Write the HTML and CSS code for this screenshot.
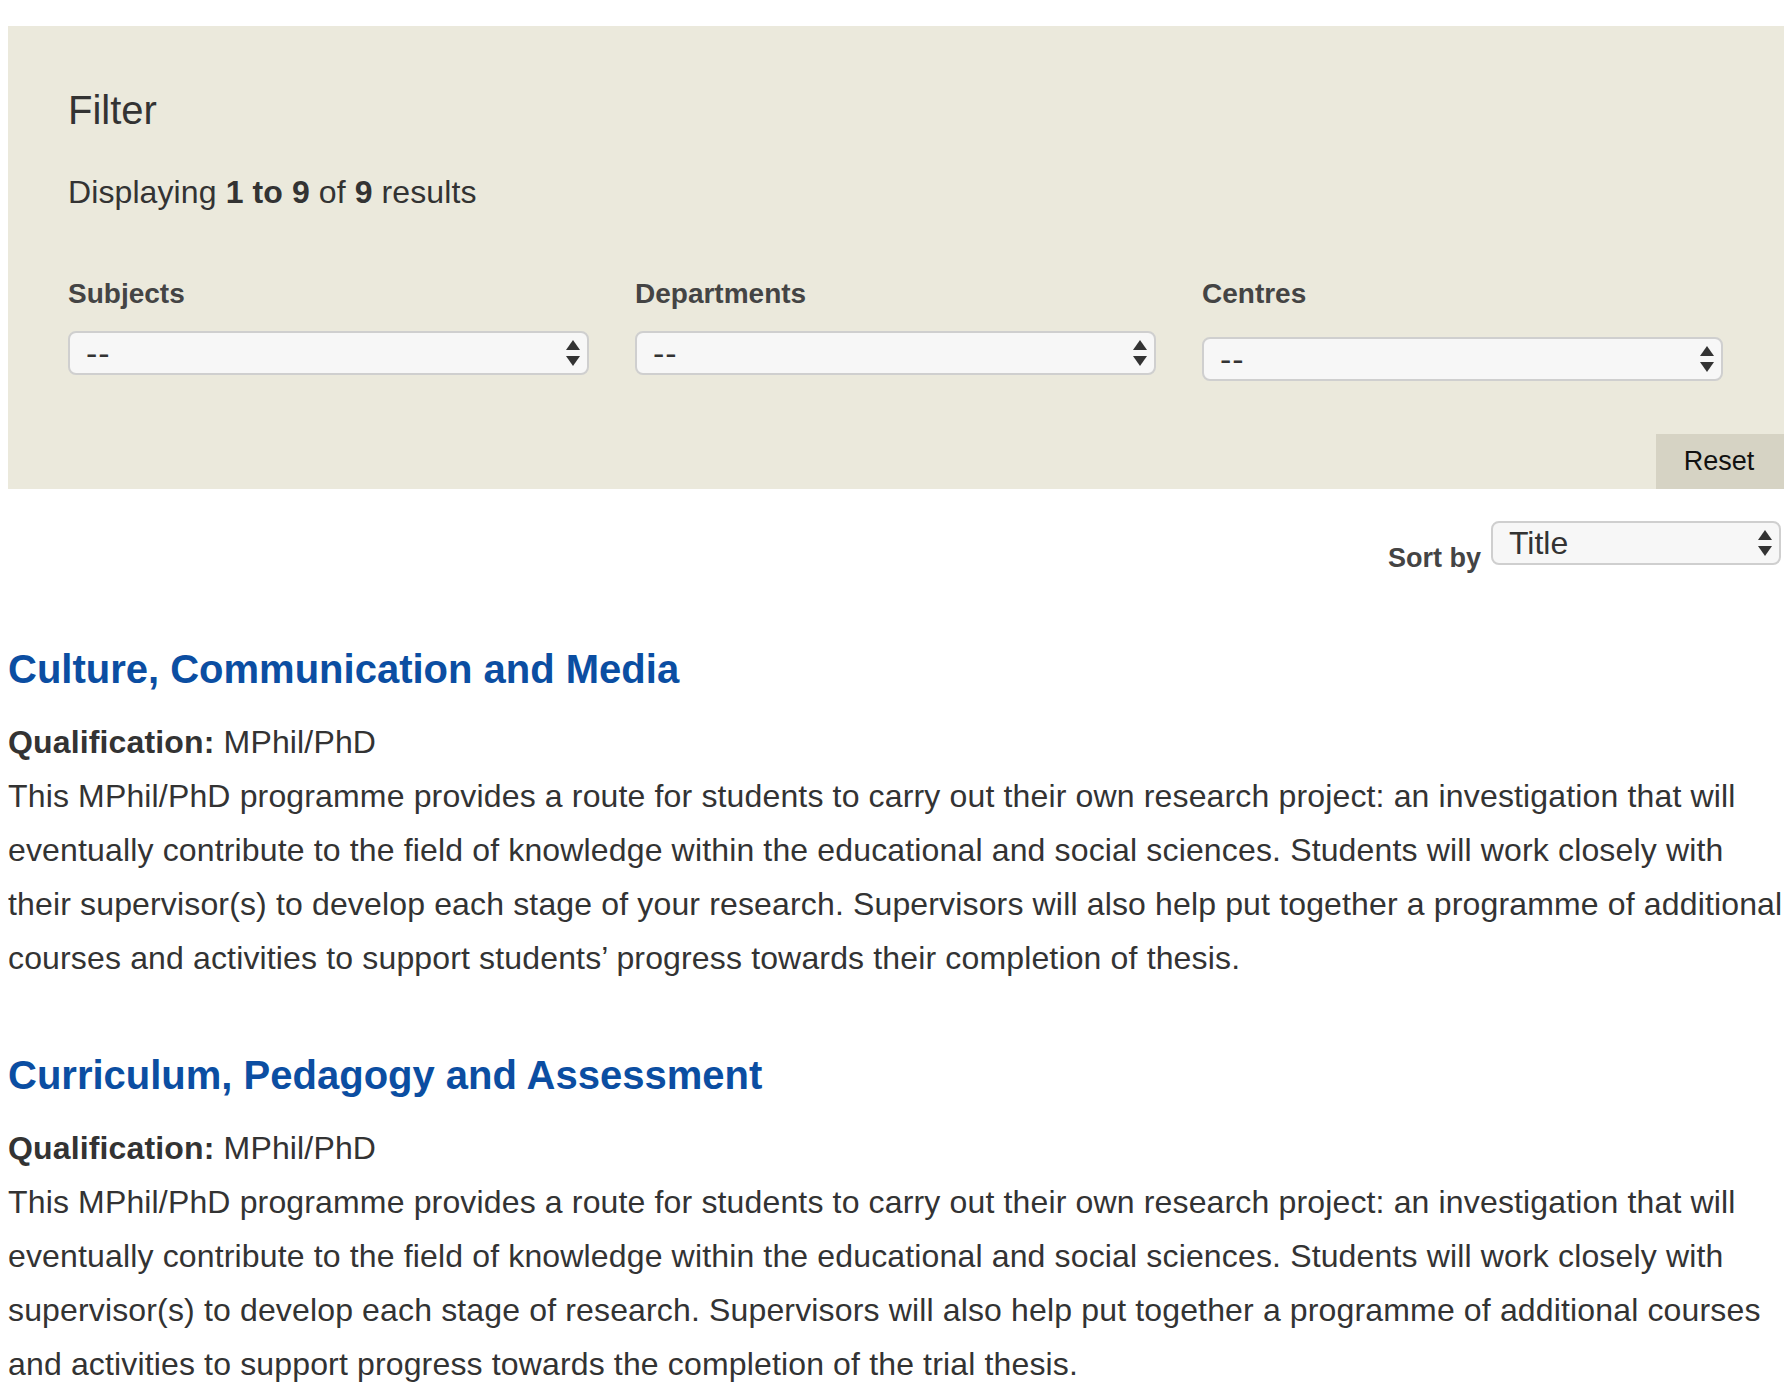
FILE: index.html
```html
<!DOCTYPE html>
<html lang="en">
<head>
<meta charset="utf-8">
<title>Research programmes</title>
<link rel="stylesheet" href="styles.css">
</head>
<body>
<div class="page">
  <section class="filter">
    <h2 class="filter__title">Filter</h2>
    <p class="filter__count">Displaying <strong>1 to 9</strong> of <strong>9</strong> results</p>
    <div class="filter__fields">
      <div class="field">
        <label class="field__label">Subjects</label>
        <div class="select">
          <select class="select__input"><option>--</option></select>
          <svg class="select__arrows" viewBox="0 0 14 26" width="14" height="26" aria-hidden="true"><polygon points="7,0 14,10 0,10"/><polygon points="0,16 14,16 7,26"/></svg>
        </div>
      </div>
      <div class="field">
        <label class="field__label">Departments</label>
        <div class="select">
          <select class="select__input"><option>--</option></select>
          <svg class="select__arrows" viewBox="0 0 14 26" width="14" height="26" aria-hidden="true"><polygon points="7,0 14,10 0,10"/><polygon points="0,16 14,16 7,26"/></svg>
        </div>
      </div>
      <div class="field field--offset">
        <label class="field__label">Centres</label>
        <div class="select">
          <select class="select__input"><option>--</option></select>
          <svg class="select__arrows" viewBox="0 0 14 26" width="14" height="26" aria-hidden="true"><polygon points="7,0 14,10 0,10"/><polygon points="0,16 14,16 7,26"/></svg>
        </div>
      </div>
    </div>
    <div class="filter__actions">
      <button class="reset" type="button">Reset</button>
    </div>
  </section>

  <div class="sort">
    <label class="sort__label">Sort by</label>
    <div class="select select--sort">
      <select class="select__input select__input--sort"><option>Title</option></select>
      <svg class="select__arrows" viewBox="0 0 14 26" width="14" height="26" aria-hidden="true"><polygon points="7,0 14,10 0,10"/><polygon points="0,16 14,16 7,26"/></svg>
    </div>
  </div>

  <div class="results">
    <article class="result">
      <h3 class="result__title"><a class="result__link" href="#">Culture, Communication and Media</a></h3>
      <p class="result__meta"><strong>Qualification:</strong> MPhil/PhD</p>
      <p class="result__desc">This MPhil/PhD programme provides a route for students to carry out their own research project: an investigation that will eventually contribute to the field of knowledge within the educational and social sciences. Students will work closely with their supervisor(s) to develop each stage of your research. Supervisors will also help put together a programme of additional courses and activities to support students’ progress towards their completion of thesis.</p>
    </article>
    <article class="result">
      <h3 class="result__title"><a class="result__link" href="#">Curriculum, Pedagogy and Assessment</a></h3>
      <p class="result__meta"><strong>Qualification:</strong> MPhil/PhD</p>
      <p class="result__desc">This MPhil/PhD programme provides a route for students to carry out their own research project: an investigation that will eventually contribute to the field of knowledge within the educational and social sciences. Students will work closely with supervisor(s) to develop each stage of research. Supervisors will also help put together a programme of additional courses and activities to support progress towards the completion of the trial thesis.</p>
    </article>
  </div>
</div>
</body>
</html>
```

FILE: styles.css
```css
html, body {
  background: #ffffff;
}

body {
  margin: 8px;
  font-family: "Liberation Sans", Arial, Helvetica, sans-serif;
  color: #333333;
  font-size: 32px;
}

.page {
  display: flex;
  flex-direction: column;
}

/* ---------- Filter panel ---------- */
.filter {
  margin-top: 18px;
  background: #ebe9dc;
  padding: 60px 60px 0 60px;
  display: flex;
  flex-direction: column;
}

.filter__title {
  margin: 0;
  font-size: 40px;
  line-height: 48px;
  font-weight: normal;
  color: #333333;
}

.filter__count {
  margin: 38px 0 0 0;
  font-size: 32px;
  line-height: 40px;
  color: #333333;
  letter-spacing: 0.1px;
}

.filter__count strong {
  font-weight: bold;
}

.filter__fields {
  margin-top: 65px;
  display: grid;
  grid-template-columns: repeat(3, 521px);
  column-gap: 46px;
  align-items: start;
}

.field {
  display: flex;
  flex-direction: column;
}

.field--offset {
  padding-top: 6px;
}

.field--offset .field__label {
  margin-top: -6px;
  margin-bottom: 26px;
}

.field__label {
  font-size: 28px;
  line-height: 34px;
  font-weight: bold;
  color: #444444;
  margin-bottom: 20px;
}

/* ---------- Select ---------- */
.select {
  position: relative;
  height: 44px;
}

.select__input {
  -webkit-appearance: none;
  appearance: none;
  width: 100%;
  height: 44px;
  box-sizing: border-box;
  margin: 0;
  padding: 0 40px 0 16px;
  border: 2px solid #cfcfcf;
  border-radius: 8px;
  background: #f7f7f7;
  font-family: "Liberation Sans", Arial, Helvetica, sans-serif;
  font-size: 34px;
  letter-spacing: 1px;
  color: #333333;
  outline: none;
}

.select__input--sort {
  font-size: 32px;
  letter-spacing: 0;
}

.select__arrows {
  position: absolute;
  right: 9px;
  top: 50%;
  transform: translateY(-50%);
  fill: #333333;
  pointer-events: none;
}

/* ---------- Reset ---------- */
.filter__actions {
  display: flex;
  justify-content: flex-end;
  margin: 53px -60px 0 0;
}

.reset {
  width: 128px;
  height: 55px;
  border: none;
  border-radius: 0;
  background: #d6d3c4;
  font-family: "Liberation Sans", Arial, Helvetica, sans-serif;
  font-size: 27px;
  color: #111111;
  padding: 0 2px 0 0;
  cursor: pointer;
}

/* ---------- Sort ---------- */
.sort {
  margin-top: 32px;
  display: flex;
  justify-content: flex-end;
  align-items: flex-start;
  gap: 10px;
  padding-right: 3px;
}

.sort__label {
  margin-top: 20px;
  font-size: 27px;
  line-height: 34px;
  font-weight: bold;
  color: #444444;
}

.select--sort {
  width: 290px;
}

/* ---------- Results ---------- */
.results {
  margin-top: 70px;
  display: flex;
  flex-direction: column;
  gap: 66px;
}

.result__title {
  margin: 0;
  font-size: 40px;
  line-height: 48px;
  font-weight: bold;
}

.result__link {
  color: #0b4ea2;
  text-decoration: none;
}

.result__meta {
  margin: 22px 0 0 0;
  font-size: 32px;
  line-height: 54px;
  letter-spacing: 0.15px;
}

.result__meta strong {
  font-weight: bold;
}

.result__desc {
  margin: 0;
  font-size: 32px;
  line-height: 54px;
  letter-spacing: 0.15px;
}
```
